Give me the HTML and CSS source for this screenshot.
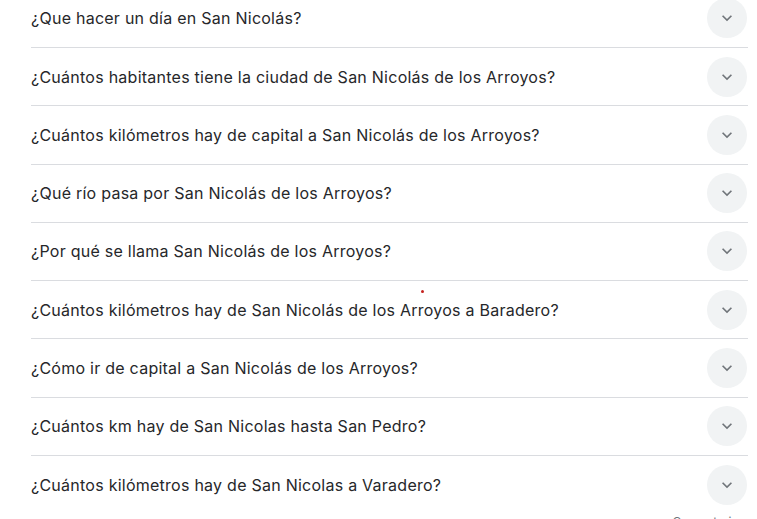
FILE: index.html
```html
<!DOCTYPE html>
<html lang="es">
<head>
<meta charset="utf-8">
<link rel="stylesheet" href="styles.css">
</head>
<body>
<div class="paa">
  <div class="item"><span class="q">¿Que hacer un día en San Nicolás?</span><span class="btn"><svg viewBox="0 0 24 24" width="20" height="20"><path d="M7.41 8.59L12 13.17l4.59-4.58L18 10l-6 6-6-6 1.41-1.41z" fill="#70757a"/></svg></span></div>
  <div class="item"><span class="q">¿Cuántos habitantes tiene la ciudad de San Nicolás de los Arroyos?</span><span class="btn"><svg viewBox="0 0 24 24" width="20" height="20"><path d="M7.41 8.59L12 13.17l4.59-4.58L18 10l-6 6-6-6 1.41-1.41z" fill="#70757a"/></svg></span></div>
  <div class="item"><span class="q">¿Cuántos kilómetros hay de capital a San Nicolás de los Arroyos?</span><span class="btn"><svg viewBox="0 0 24 24" width="20" height="20"><path d="M7.41 8.59L12 13.17l4.59-4.58L18 10l-6 6-6-6 1.41-1.41z" fill="#70757a"/></svg></span></div>
  <div class="item"><span class="q">¿Qué río pasa por San Nicolás de los Arroyos?</span><span class="btn"><svg viewBox="0 0 24 24" width="20" height="20"><path d="M7.41 8.59L12 13.17l4.59-4.58L18 10l-6 6-6-6 1.41-1.41z" fill="#70757a"/></svg></span></div>
  <div class="item"><span class="q">¿Por qué se llama San Nicolás de los Arroyos?</span><span class="btn"><svg viewBox="0 0 24 24" width="20" height="20"><path d="M7.41 8.59L12 13.17l4.59-4.58L18 10l-6 6-6-6 1.41-1.41z" fill="#70757a"/></svg></span></div>
  <div class="item"><span class="q">¿Cuántos kilómetros hay de San Nicolás de los Arroyos a Baradero?</span><span class="btn"><svg viewBox="0 0 24 24" width="20" height="20"><path d="M7.41 8.59L12 13.17l4.59-4.58L18 10l-6 6-6-6 1.41-1.41z" fill="#70757a"/></svg></span><span class="dot"></span></div>
  <div class="item"><span class="q">¿Cómo ir de capital a San Nicolás de los Arroyos?</span><span class="btn"><svg viewBox="0 0 24 24" width="20" height="20"><path d="M7.41 8.59L12 13.17l4.59-4.58L18 10l-6 6-6-6 1.41-1.41z" fill="#70757a"/></svg></span></div>
  <div class="item"><span class="q">¿Cuántos km hay de San Nicolas hasta San Pedro?</span><span class="btn"><svg viewBox="0 0 24 24" width="20" height="20"><path d="M7.41 8.59L12 13.17l4.59-4.58L18 10l-6 6-6-6 1.41-1.41z" fill="#70757a"/></svg></span></div>
  <div class="item last"><span class="q">¿Cuántos kilómetros hay de San Nicolas a Varadero?</span><span class="btn"><svg viewBox="0 0 24 24" width="20" height="20"><path d="M7.41 8.59L12 13.17l4.59-4.58L18 10l-6 6-6-6 1.41-1.41z" fill="#70757a"/></svg></span></div>
  <div class="feedback">Comentarios</div>
</div>
</body>
</html>
```
FILE: styles.css
```css
html, body { margin: 0; padding: 0; background: #fff; overflow: hidden; }
body { font-family: Inter, Roboto, "Noto Sans", Arial, sans-serif; color: #202124; }
.paa { margin: -10.3px 0 0 31px; width: 717px; }
.item { position: relative; display: flex; align-items: center; justify-content: space-between; box-sizing: border-box; height: 58.29px; border-bottom: 1px solid #dadce0; }
.item.last { border-bottom: none; }
.q { font-size: 16px; line-height: 24px; letter-spacing: 0.25px; color: #26272a; }
.btn { width: 40px; height: 40px; border-radius: 50%; background: #f1f3f4; display: flex; align-items: center; justify-content: center; margin-right: 1px; }
.dot { position: absolute; left: 390px; top: 9px; width: 3px; height: 3px; border-radius: 50%; background: #c5221f; }
.feedback { text-align: right; font-size: 12px; color: #70757a; line-height: 16px; padding-right: 3px; }
```
